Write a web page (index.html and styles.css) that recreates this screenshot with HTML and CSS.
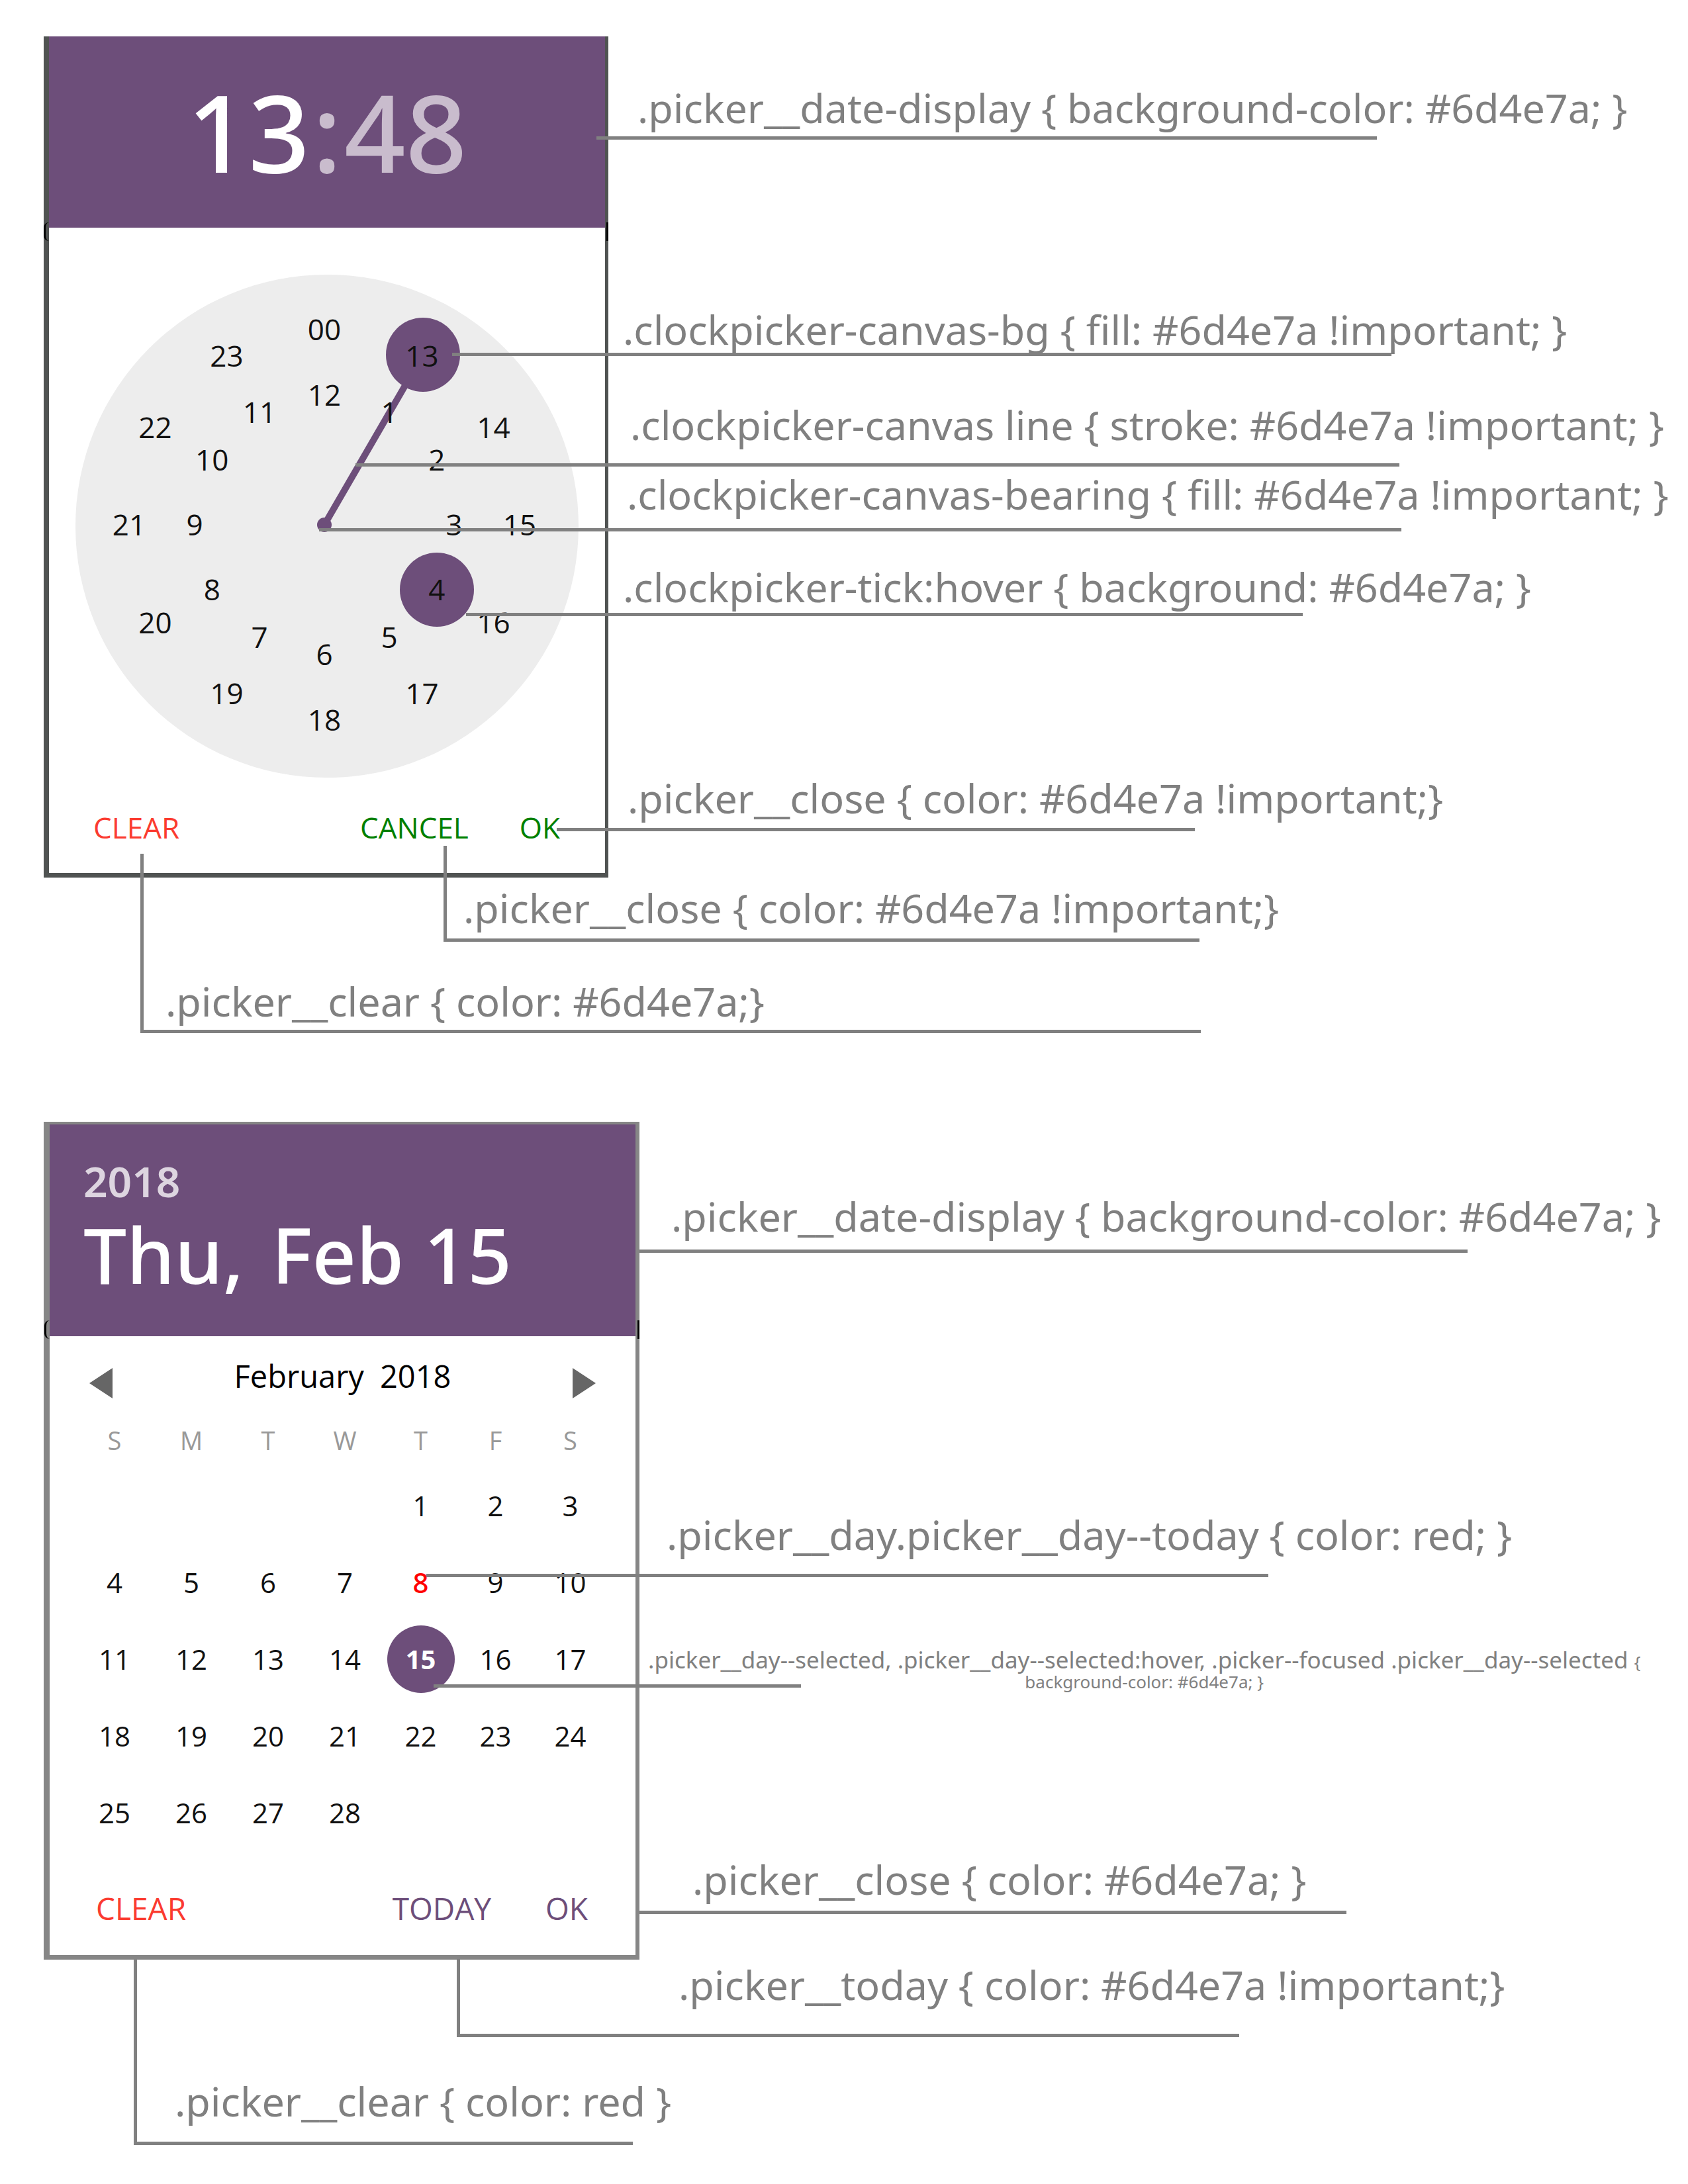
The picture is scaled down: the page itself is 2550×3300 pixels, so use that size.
FILE: index.html
```html
<!DOCTYPE html>
<html lang="en">
<head>
<meta charset="utf-8">
<meta name="viewport" content="width=device-width, initial-scale=1">
<title>Picker colour guide</title>
<link rel="stylesheet" href="styles.css">
</head>
<body>
<main>
  <section class="guide guide--time" aria-label="Time picker">
    <div class="picker picker--time">
      <header class="picker__display picker__display--time">
        <span>13</span><span class="picker__colon">:</span><span class="picker__minutes">48</span>
      </header>
      <div class="clock">
        <svg class="clock__canvas" viewBox="0 0 760 760" aria-hidden="true">
          <line x1="376" y1="378" x2="525" y2="121" stroke="#6d4e7a" stroke-width="10"/>
          <circle cx="376" cy="378" r="11" fill="#6d4e7a"/>
          <circle cx="525" cy="121" r="56" fill="#6d4e7a"/>
        </svg>
        <button class="tick" style="--h:0">00</button>
        <button class="tick" style="--h:1">13</button>
        <button class="tick" style="--h:2">14</button>
        <button class="tick" style="--h:3">15</button>
        <button class="tick" style="--h:4">16</button>
        <button class="tick" style="--h:5">17</button>
        <button class="tick" style="--h:6">18</button>
        <button class="tick" style="--h:7">19</button>
        <button class="tick" style="--h:8">20</button>
        <button class="tick" style="--h:9">21</button>
        <button class="tick" style="--h:10">22</button>
        <button class="tick" style="--h:11">23</button>
        <button class="tick tick--inner" style="--h:0">12</button>
        <button class="tick tick--inner" style="--h:1">1</button>
        <button class="tick tick--inner" style="--h:2">2</button>
        <button class="tick tick--inner" style="--h:3">3</button>
        <button class="tick tick--inner tick--hover" style="--h:4">4</button>
        <button class="tick tick--inner" style="--h:5">5</button>
        <button class="tick tick--inner" style="--h:6">6</button>
        <button class="tick tick--inner" style="--h:7">7</button>
        <button class="tick tick--inner" style="--h:8">8</button>
        <button class="tick tick--inner" style="--h:9">9</button>
        <button class="tick tick--inner" style="--h:10">10</button>
        <button class="tick tick--inner" style="--h:11">11</button>
      </div>
      <footer class="picker__footer">
        <button class="action action--clear">CLEAR</button>
        <button class="action action--green">CANCEL</button>
        <button class="action action--green">OK</button>
      </footer>
    </div>
    <p class="callout callout--time-display">.picker__date-display { background-color: #6d4e7a; }</p>
    <p class="callout callout--canvas-bg">.clockpicker-canvas-bg { fill: #6d4e7a !important; }</p>
    <p class="callout callout--canvas-line">.clockpicker-canvas line { stroke: #6d4e7a !important; }</p>
    <p class="callout callout--bearing">.clockpicker-canvas-bearing { fill: #6d4e7a !important; }</p>
    <p class="callout callout--tick">.clockpicker-tick:hover { background: #6d4e7a; }</p>
    <p class="callout callout--time-ok">.picker__close { color: #6d4e7a !important;}</p>
    <p class="callout callout--time-cancel">.picker__close { color: #6d4e7a !important;}</p>
    <p class="callout callout--time-clear">.picker__clear { color: #6d4e7a;}</p>
  </section>

  <section class="guide guide--date" aria-label="Date picker">
    <div class="picker picker--date">
      <header class="picker__display picker__display--date">
        <div class="picker__year">2018</div>
        <div class="picker__date"><span>Thu,</span><span>Feb 15</span></div>
      </header>
      <nav class="month">
        <button class="month__arrow" aria-label="Previous month"><svg viewBox="0 0 35 46"><path d="M35 0v46L0 23z" fill="#666"/></svg></button>
        <div class="month__title"><span>February</span><span>2018</span></div>
        <button class="month__arrow" aria-label="Next month"><svg viewBox="0 0 35 46"><path d="M0 0v46l35-23z" fill="#666"/></svg></button>
      </nav>
      <table class="days">
        <colgroup><col class="days__wide" span="4"><col class="days__narrow" span="3"></colgroup>
        <thead>
          <tr><th>S</th><th>M</th><th>T</th><th>W</th><th>T</th><th>F</th><th>S</th></tr>
        </thead>
        <tbody>
          <tr><td></td><td></td><td></td><td></td><td><button class="day">1</button></td><td><button class="day">2</button></td><td><button class="day">3</button></td></tr>
          <tr><td><button class="day">4</button></td><td><button class="day">5</button></td><td><button class="day">6</button></td><td><button class="day">7</button></td><td><button class="day day--today">8</button></td><td><button class="day">9</button></td><td><button class="day">10</button></td></tr>
          <tr><td><button class="day">11</button></td><td><button class="day">12</button></td><td><button class="day">13</button></td><td><button class="day">14</button></td><td><button class="day day--selected">15</button></td><td><button class="day">16</button></td><td><button class="day">17</button></td></tr>
          <tr><td><button class="day">18</button></td><td><button class="day">19</button></td><td><button class="day">20</button></td><td><button class="day">21</button></td><td><button class="day">22</button></td><td><button class="day">23</button></td><td><button class="day">24</button></td></tr>
          <tr><td><button class="day">25</button></td><td><button class="day">26</button></td><td><button class="day">27</button></td><td><button class="day">28</button></td><td></td><td></td><td></td></tr>
        </tbody>
      </table>
      <footer class="picker__footer picker__footer--date">
        <button class="action action--clear">CLEAR</button>
        <button class="action action--purple">TODAY</button>
        <button class="action action--purple">OK</button>
      </footer>
    </div>
    <p class="callout callout--date-display">.picker__date-display { background-color: #6d4e7a; }</p>
    <p class="callout callout--today">.picker__day.picker__day--today { color: red; }</p>
    <div class="callout-selected">
      <p class="callout-selected__text">.picker__day--selected, .picker__day--selected:hover, .picker--focused .picker__day--selected <small>{<br>background-color: #6d4e7a; }</small></p>
    </div>
    <p class="callout callout--date-ok">.picker__close { color: #6d4e7a; }</p>
    <p class="callout callout--date-today">.picker__today { color: #6d4e7a !important;}</p>
    <p class="callout callout--date-clear">.picker__clear { color: red }</p>
  </section>
</main>
</body>
</html>
```
FILE: styles.css
```css
:root {
  --purple: #6d4e7a;
  --grey: #808080;
}

* { box-sizing: border-box; }

body {
  margin: 0;
  background: #fff;
  color: #111;
  font-family: "Open Sans", "Noto Sans", sans-serif;
}

p { margin: 0; }

button {
  padding: 0;
  border: 0;
  background: none;
  color: inherit;
  font: inherit;
  cursor: pointer;
}

.guide {
  position: relative;
  padding-left: 66px;
}
.guide--time { padding-top: 55px; padding-bottom: 315px; }
.guide--date { padding-top: 54px; padding-bottom: 320px; }

/* Picker cards */
.picker {
  position: relative;
  background: #fff;
}
.picker--time {
  width: 853px;
  border: solid #505352;
  border-width: 0 5px 7px 8px;
}
.picker--date {
  width: 900px;
  border: solid #868686;
  border-width: 4px 6px 7px 9px;
}

/* Dark notches on the card edges beside the header's lower edge */
.picker::before,
.picker::after {
  content: "";
  position: absolute;
  height: 28px;
}
.picker::before {
  left: -8px;
  width: 7px;
  border-left: 3px solid #000;
  border-radius: 8px 0 0 8px;
}
.picker::after {
  right: -6px;
  width: 3px;
  background: #000;
}
.picker--time::before,
.picker--time::after { top: 281px; }
.picker--time::after { right: -5px; }
.picker--date::before,
.picker--date::after { top: 296px; }

.picker__display {
  background: var(--purple);
  color: #fff;
  font-family: "Noto Sans", "Open Sans", sans-serif;
  font-weight: 500;
}
.picker__display--time {
  display: flex;
  align-items: center;
  justify-content: center;
  height: 289px;
  padding-bottom: 4px;
  font-size: 162px;
  line-height: 200px;
}
.picker__colon { margin: 0 4px; }
.picker__colon,
.picker__minutes { color: #c9bccd; }
.picker__display--date { padding: 46px 51px 54px; }
.picker__year {
  color: #ddd5e0;
  font-size: 64px;
  font-weight: 600;
  line-height: 80px;
}
.picker__date {
  display: flex;
  gap: 42px;
  font-size: 116px;
  line-height: 140px;
}

.picker__footer {
  display: flex;
  gap: 77px;
  margin-top: 45px;
  padding: 0 68px 39px 67px;
  font-size: 44px;
  line-height: 60px;
}
.picker__footer--date {
  gap: 82px;
  margin-top: 56px;
  padding: 0 72px 41px 70px;
  font-size: 46px;
}
.action--clear { margin-right: auto; color: #fb3b30; }
.action--green { color: #008000; }
.action--purple { color: var(--purple); }

/* Clock face */
.clock {
  position: relative;
  width: 760px;
  height: 760px;
  margin: 71px auto 0;
  border-radius: 50%;
  background: #ededed;
}
.clock__canvas { display: block; }
.tick {
  --r: 295px;
  position: absolute;
  left: calc(376px + var(--r) * sin(var(--h) * 30deg));
  top: calc(378px - var(--r) * cos(var(--h) * 30deg));
  width: 112px;
  height: 112px;
  margin: -56px 0 0 -56px;
  padding-bottom: 2px;
  border-radius: 50%;
  font-size: 44px;
  line-height: 60px;
}
.tick--inner { --r: 196px; }
.tick--hover { background: var(--purple); }

/* Calendar */
.month {
  display: flex;
  align-items: flex-start;
  justify-content: space-between;
  height: 64px;
  margin-top: 30px;
  padding: 0 60px;
}
.month__arrow {
  align-self: flex-end;
  width: 35px;
  height: 46px;
}
.month__arrow svg { display: block; }
.month__title {
  display: flex;
  gap: 24px;
  color: #000;
  font-size: 47px;
  line-height: 60px;
}
.days {
  margin: 22px 0 0 40px;
  border-collapse: collapse;
  table-layout: fixed;
  width: 803px;
  text-align: center;
  font-size: 42px;
  line-height: 60px;
}
.days__wide { width: 116px; }
.days__narrow { width: 113px; }
.days th {
  height: 82px;
  padding: 0;
  color: #999;
  font-size: 38px;
  font-weight: 400;
}
.days td { height: 116px; padding: 0; }
.day {
  width: 102px;
  height: 102px;
  border-radius: 50%;
  vertical-align: middle;
}
.day--today {
  color: #f00;
  font-family: "Noto Sans", "Open Sans", sans-serif;
  font-weight: 500;
}
.day--selected { background: var(--purple); color: #fff; font-size: 40px; font-weight: 700; }

/* Callouts: the rule's text over the leader line that points at the part */
.callout {
  position: absolute;
  border-bottom: 5px solid var(--grey);
  color: var(--grey);
  font-family: "Noto Sans", "Open Sans", sans-serif;
  font-size: 61px;
  line-height: 60px;
  white-space: nowrap;
}
.callout--time-display { left: 901px; top: 133px; width: 1179px; padding: 0 0 13px 62px; }
.callout--canvas-bg { left: 683px; top: 468px; width: 1419px; padding: 0 0 5px 258px; }
.callout--canvas-line { left: 537px; top: 612px; width: 1577px; padding: 0 0 28px 415px; }
.callout--bearing { left: 482px; top: 717px; width: 1635px; padding: 0 0 21px 465px; }
.callout--tick { left: 704px; top: 857px; width: 1264px; padding: 0 0 9px 237px; }
.callout--time-ok { left: 841px; top: 1176px; width: 964px; padding: 0 0 15px 107px; }
.callout--time-cancel { left: 670px; top: 1342px; width: 1142px; padding: 0 0 16px 30px; }
.callout--time-clear { left: 212px; top: 1483px; width: 1602px; padding: 0 0 13px 38px; }
.callout--date-display { left: 966px; top: 167px; width: 1251px; padding: 0 0 20px 48px; }
.callout--today { left: 644px; top: 648px; width: 1272px; padding: 0 0 29px 363px; }
.callout--date-ok { left: 966px; top: 1169px; width: 1068px; padding: 0 0 17px 80px; }
.callout--date-today { left: 690px; top: 1328px; width: 1182px; padding: 0 0 44px 335px; }
.callout--date-clear { left: 202px; top: 1504px; width: 754px; padding: 0 0 31px 62px; }

/* Upright part of the leader */
.callout--time-cancel::before,
.callout--time-clear::before,
.callout--date-today::before,
.callout--date-clear::before {
  content: "";
  position: absolute;
  left: 0;
  bottom: -5px;
  width: 5px;
  background: var(--grey);
}
.callout--time-cancel::before { height: 145px; }
.callout--time-clear::before { height: 271px; }
.callout--date-today::before { height: 118px; }
.callout--date-clear::before { height: 280px; }

.callout-selected {
  position: absolute;
  left: 655px;
  top: 852px;
  padding-left: 324px;
  color: var(--grey);
  font-family: "Noto Sans", "Open Sans", sans-serif;
}
.callout-selected::after {
  content: "";
  position: absolute;
  left: 0;
  bottom: 3px;
  width: 555px;
  height: 5px;
  background: var(--grey);
}
.callout-selected__text {
  font-size: 35px;
  line-height: 30px;
  text-align: center;
  white-space: nowrap;
}
.callout-selected__text small { font-size: 26px; line-height: 20px; }
```
